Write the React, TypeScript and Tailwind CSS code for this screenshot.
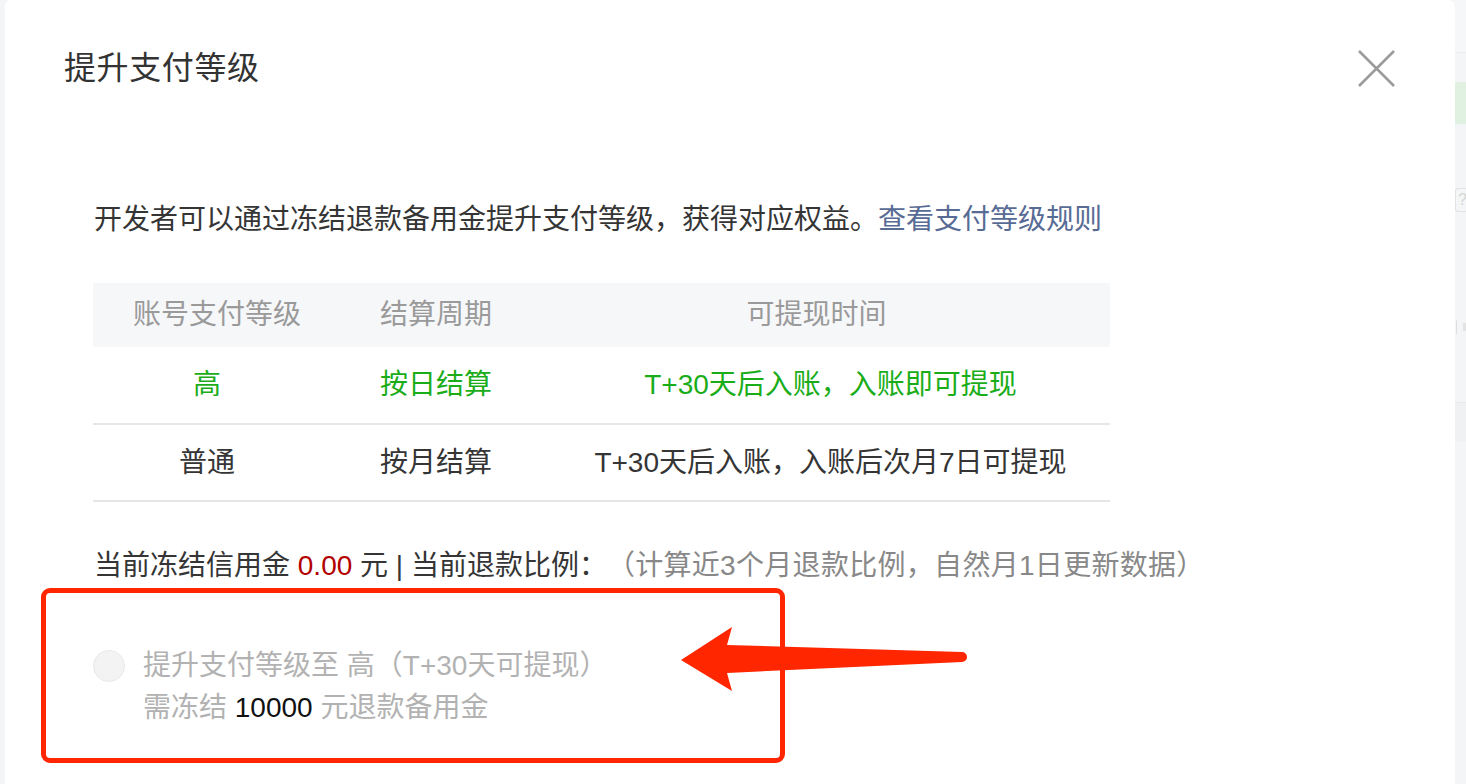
import React from "react";

const font = { fontFamily: '"Liberation Sans", "Noto Sans CJK SC", sans-serif' };

export default function App() {
  return (
    <div
      className="relative w-[1466px] h-[784px] overflow-hidden bg-[#f4f5f7] flex"
      style={font}
    >
      {/* left strip of background page */}
      <div className="w-[5px] shrink-0 bg-[#f4f5f7]" />

      {/* modal */}
      <div className="w-[1450px] shrink-0 h-[784px] bg-white rounded-t-[6px] flex flex-col">
        <div className="flex justify-between items-start pl-[59px] pr-[60px] pt-[48px]">
          <div className="text-[32px] leading-[40px] text-[#333333] tracking-[0.6px]">提升支付等级</div>
          <svg width="37" height="37" viewBox="0 0 37 37" className="mt-[2px]">
            <path d="M1 1 L36 36 M36 1 L1 36" stroke="#9b9b9b" strokeWidth="2.6" fill="none" />
          </svg>
        </div>

        <div className="ml-[89px] mt-[112px] text-[28px] leading-[40px] text-[#353535]">
          开发者可以通过冻结退款备用金提升支付等级，获得对应权益。
          <span className="text-[#576b95]">查看支付等级规则</span>
        </div>

        {/* table */}
        <div className="ml-[88px] mt-[43px] w-[1017px] text-[28px]">
          <div className="grid grid-cols-[228px_230px_559px] h-[64px] items-center bg-[#f6f7f9] text-[#9a9a9a]">
            <div className="text-center pl-[20px]">账号支付等级</div>
            <div className="text-center">结算周期</div>
            <div className="text-center pr-[28px]">可提现时间</div>
          </div>
          <div className="grid grid-cols-[228px_230px_559px] h-[78px] items-center border-b-2 border-[#e6e6e8] text-[#1aad19]">
            <div className="text-center">高</div>
            <div className="text-center">按日结算</div>
            <div className="text-center">T+30天后入账，入账即可提现</div>
          </div>
          <div className="grid grid-cols-[228px_230px_559px] h-[77px] items-center border-b-2 border-[#e6e6e8] text-[#353535]">
            <div className="text-center">普通</div>
            <div className="text-center">按月结算</div>
            <div className="text-center">T+30天后入账，入账后次月7日可提现</div>
          </div>
        </div>

        <div className="ml-[89px] mt-[44px] text-[28px] leading-[40px] text-[#353535] whitespace-nowrap">
          当前冻结信用金 <span className="text-[#b30000]">0.00</span> 元 | 当前退款比例：
          <span className="ml-[14px] text-[#888888] tracking-[0.3px]">（计算近3个月退款比例，自然月1日更新数据）</span>
        </div>

        {/* option */}
        <div className="ml-[88px] mt-[59px] flex items-start gap-[18px]">
          <div className="mt-[5px] w-[32px] h-[32px] rounded-full bg-[#f3f3f3] border border-[#e8e8e8] shrink-0" />
          <div className="text-[28px] leading-[42px] text-[#b2b2b2]">
            <div>提升支付等级至 高（T+30天可提现）</div>
            <div>
              需冻结 <span className="text-[#111111]">10000</span> 元退款备用金
            </div>
          </div>
        </div>
      </div>

      {/* right strip of background page */}
      <div className="flex-1 flex flex-col bg-[#f4f5f7]">
        <div className="h-[53px] bg-[#f6f7f8] border-b border-[#ececee]" />
        <div className="h-[29px]" />
        <div className="h-[42px] bg-[#e0f0e1]" />
        <div className="h-[64px]" />
        <div className="h-[24px] border border-r-0 border-[#e2e3e5] rounded-l-[3px] text-[16px] leading-[22px] text-[#d6d6d6] pl-[2px] overflow-hidden">?</div>
        <div className="h-[108px]" />
        <div className="h-[14px] flex gap-[6px] items-center pl-[1px]">
          <div className="w-[1px] h-[14px] bg-[#dedede]" />
          <div className="w-[4px] h-[8px] bg-[#e3e3e3]" />
        </div>
        <div className="h-[68px]" />
        <div className="h-[40px] bg-[#f0f1f3] border-t border-[#e8e9eb]" />
      </div>

      {/* annotation: red box */}
      <div className="absolute left-[41px] top-[588px] w-[744px] h-[175px] border-[5px] border-[#ff2600] rounded-[9px]" />

      {/* annotation: arrow */}
      <svg className="absolute left-0 top-0" width="1466" height="784" viewBox="0 0 1466 784">
        <path
          d="M681 660 L732 627 L727 645 L962 652 A5 5 0 0 1 962 662 L727 673 L732 691 Z"
          fill="#ff2600"
        />
      </svg>
    </div>
  );
}
